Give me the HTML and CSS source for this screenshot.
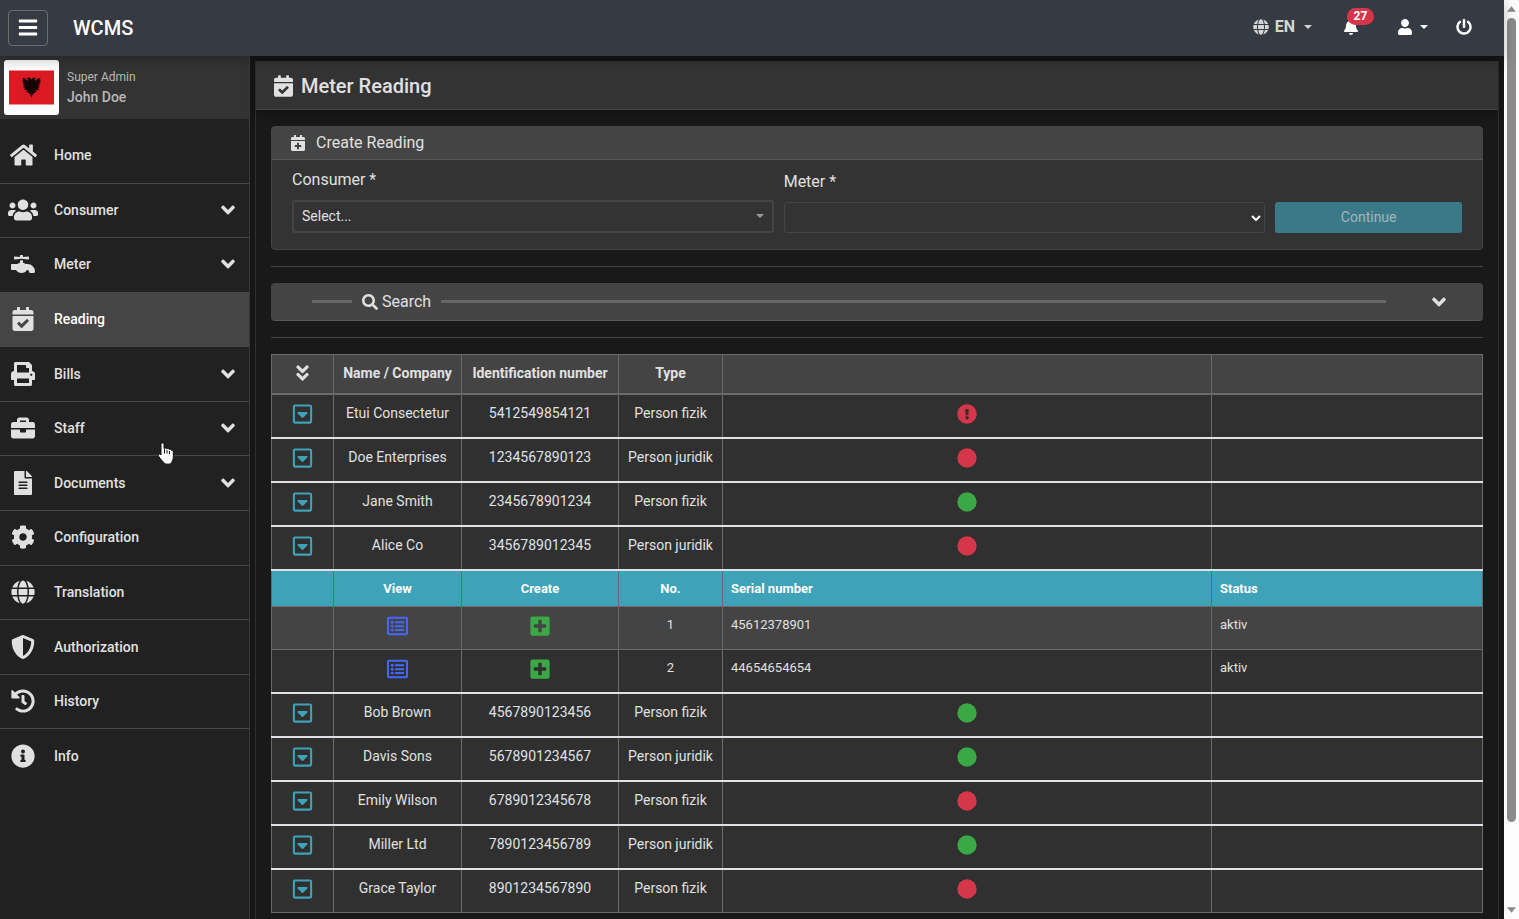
FILE: index.html
```
<!DOCTYPE html>
<html lang="en">
<head>
  <meta charset="UTF-8">
  <meta name="viewport" content="width=device-width, initial-scale=1.0">
  <title>WCMS - Meter Reading</title>
  <link rel="stylesheet" href="styles.css">
</head>
<body>

  <!-- icons -->
  <svg class="sprite" aria-hidden="true">
    <symbol id="bars" viewBox="0 0 448 512"><path d="M16 132h416c8.837 0 16-7.163 16-16V76c0-8.837-7.163-16-16-16H16C7.163 60 0 67.163 0 76v40c0 8.837 7.163 16 16 16zm0 160h416c8.837 0 16-7.163 16-16v-40c0-8.837-7.163-16-16-16H16c-8.837 0-16 7.163-16 16v40c0 8.837 7.163 16 16 16zm0 160h416c8.837 0 16-7.163 16-16v-40c0-8.837-7.163-16-16-16H16c-8.837 0-16 7.163-16 16v40c0 8.837 7.163 16 16 16z"/></symbol>
    <symbol id="home" viewBox="0 0 576 512"><path d="M280.37 148.26L96 300.11V464a16 16 0 0 0 16 16l112.06-.29a16 16 0 0 0 15.92-16V368a16 16 0 0 1 16-16h64a16 16 0 0 1 16 16v95.64a16 16 0 0 0 16 16.05L464 480a16 16 0 0 0 16-16V300L295.67 148.26a12.19 12.19 0 0 0-15.3 0zM571.6 251.47L488 182.56V44.05a12 12 0 0 0-12-12h-56a12 12 0 0 0-12 12v72.61L318.47 43a48 48 0 0 0-61 0L4.34 251.47a12 12 0 0 0-1.6 16.9l25.5 31A12 12 0 0 0 45.15 301l235.22-193.74a12.19 12.19 0 0 1 15.3 0L530.9 301a12 12 0 0 0 16.9-1.6l25.5-31a12 12 0 0 0-1.7-16.93z"/></symbol>
    <symbol id="users" viewBox="0 0 640 512"><path d="M96 224c35.3 0 64-28.7 64-64s-28.7-64-64-64-64 28.7-64 64 28.7 64 64 64zm448 0c35.3 0 64-28.7 64-64s-28.7-64-64-64-64 28.7-64 64 28.7 64 64 64zm32 32h-64c-17.6 0-33.5 7.1-45.1 18.6 40.3 22.1 68.9 62 75.1 109.4h66c17.7 0 32-14.3 32-32v-32c0-35.3-28.7-64-64-64zm-256 0c61.9 0 112-50.1 112-112S381.9 32 320 32 208 82.1 208 144s50.1 112 112 112zm76.8 32h-8.3c-20.8 10-43.9 16-68.5 16s-47.6-6-68.5-16h-8.3C179.6 288 128 339.6 128 403.2V432c0 26.5 21.5 48 48 48h288c26.5 0 48-21.5 48-48v-28.8c0-63.6-51.6-115.2-115.2-115.2zm-223.7-13.4C161.5 263.1 145.6 256 128 256H64c-35.3 0-64 28.7-64 64v32c0 17.7 14.3 32 32 32h65.9c6.3-47.4 34.9-87.3 75.2-109.4z"/></symbol>
    <symbol id="faucet" viewBox="0 0 512 512"><path d="M352 256H313.39c-15.71-13.44-35.46-23.07-57.39-28V180.44l-32-3.38-32 3.38V228c-21.93 5-41.68 14.6-57.39 28H16A16 16 0 0 0 0 272v96a16 16 0 0 0 16 16h92.79C129.38 421.73 173 448 224 448s94.62-26.27 115.21-64H352a32 32 0 0 1 32 32 32 32 0 0 0 32 32h64a32 32 0 0 0 32-32A160 160 0 0 0 352 256ZM81.59 159.91l142.41-15 142.41 15c9.42 1 17.59-6.81 17.59-16.8V112.89c0-10-8.17-17.8-17.59-16.81L256 107.74V80a16 16 0 0 0-16-16H208a16 16 0 0 0-16 16v27.74L81.59 96.08C72.17 95.09 64 102.9 64 112.89v30.22C64 153.1 72.17 160.91 81.59 159.91Z"/></symbol>
    <symbol id="calendar-check" viewBox="0 0 448 512"><path d="M436 160H12c-6.627 0-12-5.373-12-12v-36c0-26.51 21.49-48 48-48h48V12c0-6.627 5.373-12 12-12h40c6.627 0 12 5.373 12 12v52h128V12c0-6.627 5.373-12 12-12h40c6.627 0 12 5.373 12 12v52h48c26.51 0 48 21.49 48 48v36c0 6.627-5.373 12-12 12zM12 192h424c6.627 0 12 5.373 12 12v260c0 26.51-21.49 48-48 48H48c-26.51 0-48-21.49-48-48V204c0-6.627 5.373-12 12-12zm333.296 95.947l-28.169-28.398c-4.667-4.705-12.265-4.736-16.97-.068L194.12 364.665l-45.98-46.352c-4.667-4.705-12.266-4.736-16.971-.068l-28.397 28.17c-4.705 4.667-4.736 12.265-.068 16.97l82.601 83.269c4.667 4.705 12.265 4.736 16.97.068l142.953-141.805c4.705-4.667 4.736-12.265.068-16.97z"/></symbol>
    <symbol id="calendar-plus" viewBox="0 0 448 512"><path d="M436 160H12c-6.6 0-12-5.4-12-12v-36c0-26.5 21.5-48 48-48h48V12c0-6.6 5.4-12 12-12h40c6.6 0 12 5.4 12 12v52h128V12c0-6.6 5.4-12 12-12h40c6.6 0 12 5.4 12 12v52h48c26.5 0 48 21.5 48 48v36c0 6.6-5.4 12-12 12zM12 192h424c6.6 0 12 5.4 12 12v260c0 26.5-21.5 48-48 48H48c-26.5 0-48-21.5-48-48V204c0-6.6 5.4-12 12-12zm316 140c0-6.6-5.4-12-12-12h-60v-60c0-6.6-5.4-12-12-12h-40c-6.6 0-12 5.4-12 12v60h-60c-6.6 0-12 5.4-12 12v40c0 6.6 5.4 12 12 12h60v60c0 6.6 5.4 12 12 12h40c6.6 0 12-5.4 12-12v-60h60c6.6 0 12-5.4 12-12v-40z"/></symbol>
    <symbol id="print" viewBox="0 0 512 512"><path d="M448 192V77.25c0-8.49-3.37-16.62-9.37-22.63L393.37 9.37c-6-6-14.14-9.37-22.63-9.37H96C78.33 0 64 14.33 64 32v160c-35.35 0-64 28.65-64 64v112c0 8.84 7.16 16 16 16h48v96c0 17.67 14.33 32 32 32h320c17.67 0 32-14.33 32-32v-96h48c8.84 0 16-7.16 16-16V256c0-35.35-28.65-64-64-64zm-64 256H128v-96h256v96zm0-224H128V64h192v48c0 8.84 7.16 16 16 16h48v96zm48 72c-13.25 0-24-10.75-24-24 0-13.26 10.75-24 24-24s24 10.74 24 24c0 13.25-10.75 24-24 24z"/></symbol>
    <symbol id="briefcase" viewBox="0 0 512 512"><path d="M320 336c0 8.84-7.16 16-16 16h-96c-8.84 0-16-7.16-16-16v-48H0v144c0 25.6 22.4 48 48 48h416c25.6 0 48-22.4 48-48V288H320v48zm144-208h-80V80c0-25.6-22.4-48-48-48H176c-25.6 0-48 22.4-48 48v48H48c-25.6 0-48 22.4-48 48v80h512v-80c0-25.6-22.4-48-48-48zm-144 0H192V96h128v32z"/></symbol>
    <symbol id="file" viewBox="0 0 384 512"><path d="M224 136V0H24C10.7 0 0 10.7 0 24v464c0 13.3 10.7 24 24 24h336c13.3 0 24-10.7 24-24V160H248c-13.2 0-24-10.8-24-24zm64 236c0 6.6-5.4 12-12 12H108c-6.6 0-12-5.4-12-12v-8c0-6.6 5.4-12 12-12h168c6.6 0 12 5.4 12 12v8zm0-64c0 6.6-5.4 12-12 12H108c-6.6 0-12-5.4-12-12v-8c0-6.6 5.4-12 12-12h168c6.6 0 12 5.4 12 12v8zm0-72v8c0 6.6-5.4 12-12 12H108c-6.6 0-12-5.4-12-12v-8c0-6.6 5.4-12 12-12h168c6.6 0 12 5.4 12 12zm96-114.1v6.1H256V0h6.1c6.4 0 12.5 2.5 17 7l97.9 98c4.5 4.5 7 10.6 7 16.9z"/></symbol>
    <symbol id="cog" viewBox="0 0 512 512"><path d="M487.4 315.7l-42.6-24.6c4.3-23.2 4.3-47 0-70.2l42.6-24.6c4.9-2.8 7.1-8.6 5.5-14-11.1-35.6-30-67.8-54.7-94.6-3.8-4.1-10-5.1-14.8-2.3L380.8 110c-17.9-15.4-38.5-27.3-60.8-35.1V25.8c0-5.6-3.9-10.5-9.4-11.7-36.7-8.2-74.3-7.8-109.2 0-5.5 1.2-9.4 6.1-9.4 11.7V75c-22.2 7.9-42.8 19.8-60.8 35.1L88.7 85.5c-4.9-2.8-11-1.9-14.8 2.3-24.7 26.7-43.6 58.9-54.7 94.6-1.7 5.4.6 11.2 5.5 14L67.3 221c-4.3 23.2-4.3 47 0 70.2l-42.6 24.6c-4.9 2.8-7.1 8.6-5.5 14 11.1 35.6 30 67.8 54.7 94.6 3.8 4.1 10 5.1 14.8 2.3l42.6-24.6c17.9 15.4 38.5 27.3 60.8 35.1v49.2c0 5.6 3.9 10.5 9.4 11.7 36.7 8.2 74.3 7.8 109.2 0 5.5-1.2 9.4-6.1 9.4-11.7v-49.2c22.2-7.9 42.8-19.8 60.8-35.1l42.6 24.6c4.9 2.8 11 1.9 14.8-2.3 24.7-26.7 43.6-58.9 54.7-94.6 1.5-5.5-.7-11.3-5.6-14.1zM256 336c-44.1 0-80-35.9-80-80s35.9-80 80-80 80 35.9 80 80-35.9 80-80 80z"/></symbol>
    <symbol id="globe" viewBox="0 0 496 512"><path d="M336.5 160C322 70.7 287.8 8 248 8s-74 62.7-88.5 152h177zM152 256c0 22.2 1.2 43.5 3.3 64h185.3c2.1-20.5 3.3-41.8 3.3-64s-1.2-43.5-3.3-64H155.3c-2.1 20.5-3.3 41.8-3.3 64zm324.7-96c-28.6-67.9-86.5-120.4-158-141.6 24.4 33.8 41.2 84.7 50 141.6h108zM177.2 18.4C105.8 39.6 47.8 92.1 19.3 160h108c8.7-56.9 25.5-107.8 49.9-141.6zM487.4 192H372.7c2.1 21 3.3 42.5 3.3 64s-1.2 43-3.3 64h114.6c5.5-20.5 8.6-41.8 8.6-64s-3.1-43.5-8.5-64zM120 256c0-21.5 1.2-43 3.3-64H8.6C3.2 212.5 0 233.8 0 256s3.2 43.5 8.6 64h114.6c-2-21-3.2-42.5-3.2-64zm39.5 96c14.5 89.3 48.7 152 88.5 152s74-62.7 88.5-152h-177zm159.3 141.6c71.4-21.2 129.4-73.7 158-141.6h-108c-8.8 56.9-25.6 107.8-50 141.6zM19.3 352c28.6 67.9 86.5 120.4 158 141.6-24.4-33.8-41.2-84.7-50-141.6h-108z"/></symbol>
    <symbol id="shield" viewBox="0 0 512 512"><path d="M466.5 83.7l-192-80a48.15 48.15 0 0 0-36.9 0l-192 80C27.7 91.1 16 108.6 16 128c0 198.5 114.5 335.7 221.5 380.3 11.8 4.9 25.1 4.9 36.9 0C360.1 472.6 496 349.3 496 128c0-19.4-11.7-36.9-29.5-44.3zM256.1 446.3l-.1-381 175.9 73.3c-3.3 151.4-82.1 261.1-175.8 307.7z"/></symbol>
    <symbol id="history" viewBox="0 0 512 512"><path d="M504 255.531c.253 136.64-111.18 248.372-247.82 248.468-59.015.042-113.223-20.53-155.822-54.911-11.077-8.94-11.905-25.541-1.839-35.607l11.267-11.267c8.609-8.609 22.353-9.551 31.891-1.984C173.062 425.135 212.781 440 256 440c101.705 0 184-82.311 184-184 0-101.705-82.311-184-184-184-48.814 0-93.149 18.969-126.068 49.932l50.754 50.754c10.08 10.08 2.941 27.314-11.313 27.314H24c-8.837 0-16-7.163-16-16V38.627c0-14.254 17.234-21.393 27.314-11.314l49.372 49.372C129.209 34.136 189.552 8 256 8c136.81 0 247.747 110.78 248 247.531zm-180.912 78.784l9.823-12.63c8.138-10.463 6.253-25.542-4.21-33.679L288 256.349V152c0-13.255-10.745-24-24-24h-16c-13.255 0-24 10.745-24 24v135.651l65.409 50.874c10.463 8.137 25.541 6.253 33.679-4.21z"/></symbol>
    <symbol id="info" viewBox="0 0 512 512"><path d="M256 8C119.043 8 8 119.083 8 256c0 136.997 111.043 248 248 248s248-111.003 248-248C504 119.083 392.957 8 256 8zm0 110c23.196 0 42 18.804 42 42s-18.804 42-42 42-42-18.804-42-42 18.804-42 42-42zm56 254c0 6.627-5.373 12-12 12h-88c-6.627 0-12-5.373-12-12v-24c0-6.627 5.373-12 12-12h12v-64h-12c-6.627 0-12-5.373-12-12v-24c0-6.627 5.373-12 12-12h64c6.627 0 12 5.373 12 12v100h12c6.627 0 12 5.373 12 12v24z"/></symbol>
    <symbol id="angle-down" viewBox="0 0 320 512"><path d="M143 352.3L7 216.3c-9.4-9.4-9.4-24.6 0-33.9l22.6-22.6c9.4-9.4 24.6-9.4 33.9 0l96.4 96.4 96.4-96.4c9.4-9.4 24.6-9.4 33.9 0l22.6 22.6c9.4 9.4 9.4 24.6 0 33.9l-136 136c-9.2 9.4-24.4 9.4-33.8 0z"/></symbol>
    <symbol id="angle-double-down" viewBox="0 0 320 512"><path d="M143 256.3L7 120.3c-9.4-9.4-9.4-24.6 0-33.9l22.6-22.6c9.4-9.4 24.6-9.4 33.9 0l96.4 96.4 96.4-96.4c9.4-9.4 24.6-9.4 33.9 0L313 86.3c9.4 9.4 9.4 24.6 0 33.9l-136 136c-9.4 9.5-24.6 9.5-34 .1zm34 192l136-136c9.4-9.4 9.4-24.6 0-33.9l-22.6-22.6c-9.4-9.4-24.6-9.4-33.9 0L160 352.1l-96.4-96.4c-9.4-9.4-24.6-9.4-33.9 0L7 278.3c-9.4 9.4-9.4 24.6 0 33.9l136 136c9.4 9.5 24.6 9.5 34 .1z"/></symbol>
    <symbol id="search" viewBox="0 0 512 512"><path d="M505 442.7L405.3 343c-4.5-4.5-10.6-7-17-7H372c27.6-35.3 44-79.7 44-128C416 93.1 322.9 0 208 0S0 93.1 0 208s93.1 208 208 208c48.3 0 92.7-16.4 128-44v16.3c0 6.4 2.5 12.5 7 17l99.7 99.7c9.4 9.4 24.6 9.4 33.9 0l28.3-28.3c9.4-9.4 9.4-24.6.1-34zM208 336c-70.7 0-128-57.2-128-128 0-70.7 57.2-128 128-128 70.7 0 128 57.2 128 128 0 70.7-57.2 128-128 128z"/></symbol>
    <symbol id="bell" viewBox="0 0 448 512"><path d="M224 512c35.32 0 63.97-28.65 63.97-64H160.03c0 35.35 28.65 64 63.97 64zm215.39-149.71c-19.32-20.76-55.47-51.99-55.47-154.29 0-77.7-54.48-139.9-127.94-155.16V32c0-17.67-14.32-32-31.98-32s-31.98 14.33-31.98 32v20.84C118.56 68.1 64.08 130.3 64.08 208c0 102.3-36.15 133.53-55.47 154.29-6 6.45-8.66 14.16-8.61 21.71.11 16.4 12.98 32 32.1 32h383.8c19.12 0 32-15.6 32.1-32 .05-7.55-2.61-15.27-8.61-21.71z"/></symbol>
    <symbol id="user" viewBox="0 0 448 512"><path d="M224 256c70.7 0 128-57.3 128-128S294.7 0 224 0 96 57.3 96 128s57.3 128 128 128zm89.6 32h-16.7c-22.2 10.2-46.9 16-72.9 16s-50.6-5.8-72.9-16h-16.7C60.2 288 0 348.2 0 422.4V464c0 26.5 21.5 48 48 48h352c26.5 0 48-21.5 48-48v-41.6c0-74.2-60.2-134.4-134.4-134.4z"/></symbol>
    <symbol id="power" viewBox="0 0 512 512"><path d="M400 54.1c63 45 104 118.6 104 201.9 0 136.8-110.8 247.7-247.5 248C120 504.3 8.2 393 8 256.4 7.9 173.1 48.9 99.3 111.8 54.2c11.7-8.3 28-4.8 35 7.7L162.6 90c5.9 10.5 3.1 23.8-6.6 31-41.5 30.8-68 79.6-68 134.9-.1 92.3 74.5 168.1 168 168.1 91.6 0 168.6-74.2 168-169.1-.3-51.8-24.7-101.8-68.1-134-9.7-7.2-12.4-20.5-6.5-30.9l15.8-28.1c7-12.4 23.2-16.1 34.8-7.8zM296 264V24c0-13.3-10.7-24-24-24h-32c-13.3 0-24 10.7-24 24v240c0 13.3 10.7 24 24 24h32c13.3 0 24-10.7 24-24z"/></symbol>
    <symbol id="caret-square" viewBox="0 0 448 512"><path fill-rule="evenodd" d="M48 32h352c26.500 0 48 21.500 48 48v352c0 26.500-21.500 48-48 48H48c-26.500 0-48-21.500-48-48V80c0-26.500 21.500-48 48-48zm0 54v340c0 3.300 2.700 6 6 6h340c3.300 0 6-2.700 6-6V86c0-3.300-2.700-6-6-6H54c-3.300 0-6 2.700-6 6zm77 122h198c17.800 0 26.700 21.500 14.100 34.100l-98.900 98.300c-7.800 7.800-20.500 7.800-28.300 0l-98.900-98.300C98.300 229.500 107.200 208 125 208z"/></symbol>
    <symbol id="list-alt" viewBox="0 0 512 512"><path fill-rule="evenodd" d="M48 32h416c26.500 0 48 21.500 48 48v352c0 26.500-21.500 48-48 48H48c-26.500 0-48-21.500-48-48V80c0-26.500 21.500-48 48-48zm0 54v340c0 3.300 2.700 6 6 6h404c3.300 0 6-2.700 6-6V86c0-3.300-2.700-6-6-6H54c-3.300 0-6 2.700-6 6z"/><path d="M204 140h204a12 12 0 0 1 12 12v24a12 12 0 0 1-12 12H204a12 12 0 0 1-12-12v-24a12 12 0 0 1 12-12zm0 96h204a12 12 0 0 1 12 12v24a12 12 0 0 1-12 12H204a12 12 0 0 1-12-12v-24a12 12 0 0 1 12-12zm0 96h204a12 12 0 0 1 12 12v24a12 12 0 0 1-12 12H204a12 12 0 0 1-12-12v-24a12 12 0 0 1 12-12z"/><circle cx="128" cy="164" r="36"/><circle cx="128" cy="260" r="36"/><circle cx="128" cy="356" r="36"/></symbol>
    <symbol id="plus-square" viewBox="0 0 448 512"><path d="M400 32H48C21.500 32 0 53.500 0 80v352c0 26.500 21.500 48 48 48h352c26.500 0 48-21.500 48-48V80c0-26.500-21.500-48-48-48zm-32 252c0 6.600-5.400 12-12 12h-92v92c0 6.600-5.400 12-12 12h-56c-6.600 0-12-5.400-12-12v-92H92c-6.600 0-12-5.400-12-12v-56c0-6.600 5.400-12 12-12h92v-92c0-6.600 5.400-12 12-12h56c6.600 0 12 5.400 12 12v92h92c6.600 0 12 5.400 12 12v56z"/></symbol>
    <symbol id="exclamation" viewBox="0 0 512 512"><path d="M504 256c0 136.997-111.043 248-248 248S8 392.997 8 256C8 119.083 119.043 8 256 8s248 111.083 248 248zm-248 50c-25.405 0-46 20.595-46 46s20.595 46 46 46 46-20.595 46-46-20.595-46-46-46zm-43.673-165.346l7.418 136c.347 6.364 5.609 11.346 11.982 11.346h48.546c6.373 0 11.635-4.982 11.982-11.346l7.418-136c.375-6.874-5.098-12.654-11.982-12.654h-63.383c-6.884 0-12.356 5.780-11.981 12.654z"/></symbol>
    <symbol id="circle" viewBox="0 0 512 512"><circle cx="256" cy="256" r="248"/></symbol>
    <symbol id="caret" viewBox="0 0 8 4"><path d="M0 0h8L4 4z"/></symbol>
    <symbol id="arrow-up" viewBox="0 0 10 6"><path d="M0 6L5 0l5 6z"/></symbol>
    <symbol id="arrow-down" viewBox="0 0 10 6"><path d="M0 0l5 6 5-6z"/></symbol>
  </svg>

  <div class="page">
    <header class="navbar">
      <button type="button" class="toggle" aria-label="Toggle menu"><svg class="icon"><use href="#bars"/></svg></button>
      <a href="#" class="brand">WCMS</a>
      <nav class="navbar-links">
        <a href="#" class="lang"><svg class="icon"><use href="#globe"/></svg>EN<svg class="caret"><use href="#caret"/></svg></a>
        <a href="#" class="bell" aria-label="Notifications"><svg class="icon"><use href="#bell"/></svg><span class="badge">27</span></a>
        <a href="#" class="account" aria-label="Account"><svg class="icon"><use href="#user"/></svg><svg class="caret"><use href="#caret"/></svg></a>
        <a href="#" aria-label="Log out"><svg class="icon"><use href="#power"/></svg></a>
      </nav>
    </header>

    <div class="layout">
      <aside class="sidebar">
        <div class="profile">
          <div class="avatar">
            <svg viewBox="0 0 45 34" role="img" aria-label="Albania">
              <path fill="#dc1a24" d="M0 0h45v34H0z"/>
              <path fill="#160305" d="M22.500 9l-1.800-2-3 .4 1.600 1.500-.8 1.600-2.200-2.500-3.200-.8 1.300 2-1.400.8 1.700 1.100-1.600 1.200 2 .8-1.300 1.600 2.100.4-1.700 2.200 2.400-.2-2.200 2.700 2.800-.6 1.200.3-1.700 2.200 2.200-.4.600 1.600 1.400.2 1.600 4.200 1.600-4.200 1.400-.2.600-1.600 2.200.4-1.700-2.200 1.200-.3 2.800.6-2.200-2.700 2.400.2-1.700-2.200 2.100-.4-1.300-1.600 2-.8-1.600-1.200 1.700-1.100-1.400-.8 1.300-2-3.200.8-2.200 2.500-.8-1.600 1.600-1.500-3-.4z"/>
            </svg>
          </div>
          <div class="who">
            <span class="role">Super Admin</span>
            <strong>John Doe</strong>
          </div>
        </div>
        <ul class="menu">
          <li><a href="#"><span class="pic"><svg class="icon w-home"><use href="#home"/></svg></span>Home</a></li>
          <li><a href="#"><span class="pic"><svg class="icon w-users"><use href="#users"/></svg></span>Consumer<svg class="angle"><use href="#angle-down"/></svg></a></li>
          <li><a href="#"><span class="pic"><svg class="icon"><use href="#faucet"/></svg></span>Meter<svg class="angle"><use href="#angle-down"/></svg></a></li>
          <li class="active"><a href="#"><span class="pic"><svg class="icon"><use href="#calendar-check"/></svg></span>Reading</a></li>
          <li><a href="#"><span class="pic"><svg class="icon"><use href="#print"/></svg></span>Bills<svg class="angle"><use href="#angle-down"/></svg></a></li>
          <li><a href="#"><span class="pic"><svg class="icon"><use href="#briefcase"/></svg></span>Staff<svg class="angle"><use href="#angle-down"/></svg></a></li>
          <li><a href="#"><span class="pic"><svg class="icon"><use href="#file"/></svg></span>Documents<svg class="angle"><use href="#angle-down"/></svg></a></li>
          <li><a href="#"><span class="pic"><svg class="icon"><use href="#cog"/></svg></span>Configuration</a></li>
          <li><a href="#"><span class="pic"><svg class="icon"><use href="#globe"/></svg></span>Translation</a></li>
          <li><a href="#"><span class="pic"><svg class="icon"><use href="#shield"/></svg></span>Authorization</a></li>
          <li><a href="#"><span class="pic"><svg class="icon"><use href="#history"/></svg></span>History</a></li>
          <li><a href="#"><span class="pic"><svg class="icon"><use href="#info"/></svg></span>Info</a></li>
        </ul>
      </aside>

      <main class="panel">
        <div class="panel-header">
          <svg class="icon"><use href="#calendar-check"/></svg>
          <h1>Meter Reading</h1>
        </div>

        <div class="panel-body">
          <form class="card">
            <div class="card-header">
              <svg class="icon"><use href="#calendar-plus"/></svg>
              <h2>Create Reading</h2>
            </div>
            <div class="card-body">
              <div class="field">
                <label for="consumer">Consumer *</label>
                <div class="select-box thick">
                  <select id="consumer"><option>Select...</option></select>
                  <svg class="caret"><use href="#caret"/></svg>
                </div>
              </div>
              <div class="field">
                <label for="meter">Meter *</label>
                <div class="select-box">
                  <select id="meter"><option></option></select>
                  <svg class="check" viewBox="0 0 10 6"><path d="M1 1l4 4 4-4"/></svg>
                </div>
              </div>
              <button type="submit" class="btn-continue" disabled>Continue</button>
            </div>
          </form>

          <hr>

          <button type="button" class="search-bar">
            <span class="line short"></span>
            <svg class="icon"><use href="#search"/></svg>
            <span>Search</span>
            <span class="line"></span>
            <svg class="angle"><use href="#angle-down"/></svg>
          </button>

          <hr>

          <table class="readings">
            <colgroup>
              <col class="c-toggle"><col class="c-name"><col class="c-id"><col class="c-type"><col><col class="c-last">
            </colgroup>
            <thead>
              <tr>
                <th><button type="button" aria-label="Expand all"><svg class="double"><use href="#angle-double-down"/></svg></button></th>
                <th>Name / Company</th>
                <th>Identification number</th>
                <th>Type</th>
                <th></th>
                <th></th>
              </tr>
            </thead>
            <tbody>
              <tr>
                <td><button type="button" aria-label="Show meters"><svg class="icon"><use href="#caret-square"/></svg></button></td>
                <td>Etui Consectetur</td><td>5412549854121</td><td>Person fizik</td>
                <td><svg class="dot red"><use href="#exclamation"/></svg></td><td></td>
              </tr>
              <tr>
                <td><button type="button" aria-label="Show meters"><svg class="icon"><use href="#caret-square"/></svg></button></td>
                <td>Doe Enterprises</td><td>1234567890123</td><td>Person juridik</td>
                <td><svg class="dot red"><use href="#circle"/></svg></td><td></td>
              </tr>
              <tr>
                <td><button type="button" aria-label="Show meters"><svg class="icon"><use href="#caret-square"/></svg></button></td>
                <td>Jane Smith</td><td>2345678901234</td><td>Person fizik</td>
                <td><svg class="dot green"><use href="#circle"/></svg></td><td></td>
              </tr>
              <tr>
                <td><button type="button" aria-label="Show meters"><svg class="icon"><use href="#caret-square"/></svg></button></td>
                <td>Alice Co</td><td>3456789012345</td><td>Person juridik</td>
                <td><svg class="dot red"><use href="#circle"/></svg></td><td></td>
              </tr>
            </tbody>
            <tbody class="meters">
              <tr>
                <th></th><th>View</th><th>Create</th><th>No.</th><th>Serial number</th><th>Status</th>
              </tr>
              <tr class="odd">
                <td></td>
                <td><a href="#" class="blue" aria-label="View"><svg class="icon"><use href="#list-alt"/></svg></a></td>
                <td><a href="#" class="green" aria-label="Create"><svg class="icon"><use href="#plus-square"/></svg></a></td>
                <td>1</td><td>45612378901</td><td>aktiv</td>
              </tr>
              <tr>
                <td></td>
                <td><a href="#" class="blue" aria-label="View"><svg class="icon"><use href="#list-alt"/></svg></a></td>
                <td><a href="#" class="green" aria-label="Create"><svg class="icon"><use href="#plus-square"/></svg></a></td>
                <td>2</td><td>44654654654</td><td>aktiv</td>
              </tr>
            </tbody>
            <tbody>
              <tr>
                <td><button type="button" aria-label="Show meters"><svg class="icon"><use href="#caret-square"/></svg></button></td>
                <td>Bob Brown</td><td>4567890123456</td><td>Person fizik</td>
                <td><svg class="dot green"><use href="#circle"/></svg></td><td></td>
              </tr>
              <tr>
                <td><button type="button" aria-label="Show meters"><svg class="icon"><use href="#caret-square"/></svg></button></td>
                <td>Davis Sons</td><td>5678901234567</td><td>Person juridik</td>
                <td><svg class="dot green"><use href="#circle"/></svg></td><td></td>
              </tr>
              <tr>
                <td><button type="button" aria-label="Show meters"><svg class="icon"><use href="#caret-square"/></svg></button></td>
                <td>Emily Wilson</td><td>6789012345678</td><td>Person fizik</td>
                <td><svg class="dot red"><use href="#circle"/></svg></td><td></td>
              </tr>
              <tr>
                <td><button type="button" aria-label="Show meters"><svg class="icon"><use href="#caret-square"/></svg></button></td>
                <td>Miller Ltd</td><td>7890123456789</td><td>Person juridik</td>
                <td><svg class="dot green"><use href="#circle"/></svg></td><td></td>
              </tr>
              <tr>
                <td><button type="button" aria-label="Show meters"><svg class="icon"><use href="#caret-square"/></svg></button></td>
                <td>Grace Taylor</td><td>8901234567890</td><td>Person fizik</td>
                <td><svg class="dot red"><use href="#circle"/></svg></td><td></td>
              </tr>
            </tbody>
          </table>
        </div>
      </main>
    </div>
  </div>

  <div class="scrollbar">
    <svg><use href="#arrow-up"/></svg>
    <div class="track"><div class="thumb"></div></div>
    <svg><use href="#arrow-down"/></svg>
  </div>

  <svg class="cursor" viewBox="0 0 17 23" aria-hidden="true">
    <path d="M5.500 1C6.500 1 7 1.700 7 2.600V6.500l.6-.3c.8-.4 1.800-.1 2 .7.700-.6 2.100-.5 2.400.4.900-.4 2.200 0 2.400 1 1.200-.2 1.900.5 1.900 1.600v5.400c0 2.600-1.300 4-1.800 5.300-.4 1-1.700 1.600-3.500 1.600s-3.400-.5-4.200-1.600C5.500 19 3.500 17 1.600 14.200c-.9-1.400.4-2.700 1.700-1.900L4 13V2.600C4 1.700 4.500 1 5.500 1z"/>
    <path class="fingers" d="M7.500 7v4.500M10 8v3.500M12.500 9v3"/>
  </svg>

</body>
</html>
```
FILE: styles.css
```
* {
  box-sizing: border-box;
}

body {
  margin: 0;
  height: 100vh;
  display: flex;
  overflow: hidden;
  background-color: #161616;
  color: #e0e0e0;
  font-family: Roboto, "Liberation Sans", sans-serif;
  font-size: 16px;
  line-height: 24px;
}

a {
  color: inherit;
  text-decoration: none;
}

button {
  font-family: inherit;
  cursor: pointer;
}

svg {
  fill: currentColor;
  flex-shrink: 0;
}

.sprite {
  position: absolute;
  width: 0;
  height: 0;
}

.page {
  flex: 1;
  min-width: 0;
  display: flex;
  flex-direction: column;
}

/* navbar */
.navbar {
  flex-shrink: 0;
  display: flex;
  align-items: center;
  height: 56px;
  padding: 0 32px 0 8px;
  background-color: #363a42;
  color: #fff;
  position: relative;
  z-index: 2;
  box-shadow: 0 4px 12px rgba(0, 0, 0, 0.25);
}

.toggle {
  display: flex;
  align-items: center;
  justify-content: center;
  width: 40px;
  height: 36px;
  padding: 0 0 1px;
  background: none;
  border: 1px solid #6c6c6c;
  border-radius: 4px;
  color: #fff;
}

.toggle .icon {
  width: 20px;
  height: 21px;
}

.brand {
  margin-left: 25px;
  font-size: 20px;
  font-weight: 500;
}

.navbar-links {
  display: flex;
  align-items: center;
  margin-left: auto;
  padding-bottom: 2px;
}

.navbar-links a {
  display: flex;
  align-items: center;
  position: relative;
}

.navbar-links .icon {
  width: 16px;
  height: 16px;
}

.caret {
  width: 8px;
  height: 4px;
}

.lang {
  gap: 6px;
  margin-right: 31px;
  color: #d5d5d5;
  font-weight: 700;
}

.lang .caret {
  margin-left: 3px;
}

.bell {
  margin-right: 38px;
}

.badge {
  position: absolute;
  left: 4px;
  top: -11px;
  width: 27px;
  height: 17px;
  border-radius: 9px;
  background-color: #d6354a;
  font-size: 12px;
  font-weight: 700;
  line-height: 17px;
  text-align: center;
}

.account {
  gap: 7px;
  margin-right: 28px;
}

/* sidebar */
.layout {
  flex: 1;
  min-height: 0;
  display: flex;
}

.sidebar {
  flex-shrink: 0;
  width: 250px;
  background-color: #212121;
  border-right: 1px solid #3a3a3a;
}

.profile {
  display: flex;
  align-items: center;
  gap: 8px;
  height: 63px;
  padding: 4px;
  background-color: #333;
}

.avatar {
  display: flex;
  width: 55px;
  height: 55px;
  padding: 5px;
  background-color: #fff;
  border-radius: 3px;
}

.avatar svg {
  width: 100%;
  height: 100%;
}

.who {
  display: flex;
  flex-direction: column;
  padding-bottom: 2px;
  font-size: 14px;
  line-height: 20px;
  color: #b8b8b8;
}

.role {
  font-size: 12px;
}

.who strong {
  font-weight: 500;
}

.menu {
  list-style: none;
  margin: 10px 0 0;
  padding: 0;
  display: grid;
  grid-auto-rows: 1fr;
  height: 655px;
}

.menu li {
  border-bottom: 1px solid #484848;
}

.menu li:last-child {
  border-bottom: none;
}

.menu a {
  display: flex;
  align-items: center;
  height: 100%;
  padding: 0 14px 1px 8px;
  font-size: 14px;
  font-weight: 500;
}

.menu .pic {
  display: flex;
  justify-content: center;
  width: 30px;
  margin-right: 16px;
}

.menu .icon {
  width: 24px;
  height: 24px;
}

.menu .w-home {
  width: 27px;
}

.menu .w-users {
  width: 30px;
}

.angle {
  width: 14px;
  height: 22px;
  margin-left: auto;
}

.menu .active {
  background-color: #454545;
  border-color: #454545;
}

.menu .active a {
  color: #fff;
}

.menu .active .icon {
  color: #e0e0e0;
}

/* content */
.panel {
  flex: 1;
  min-width: 0;
  margin: 5px 5px 0;
  border: 1px solid #303030;
  border-width: 0 1px;
  background-color: #191919;
}

.panel-header {
  display: flex;
  align-items: center;
  gap: 8px;
  height: 49px;
  padding: 2px 18px 0;
  background-color: #333;
  border-bottom: 1px solid #444;
  box-shadow: 0 4px 12px rgba(0, 0, 0, 0.3);
}

.panel-header .icon {
  width: 19px;
  height: 22px;
}

h1 {
  margin: 0;
  font-size: 20px;
  font-weight: 500;
}

.panel-body {
  padding: 16px 15px;
}

hr {
  margin: 16px 0;
  border: none;
  border-top: 1px solid #444;
}

.card {
  background-color: #333;
  border: 1px solid #444;
  border-radius: 4px;
}

.card-header {
  display: flex;
  align-items: center;
  gap: 10px;
  height: 33px;
  padding: 0 18px;
  background-color: #444;
  border-bottom: 1px solid #575757;
}

.card-header .icon {
  width: 16px;
  height: 16px;
}

h2 {
  margin: 0;
  font-size: 16px;
  font-weight: 400;
}

.card-body {
  display: grid;
  grid-template-columns: repeat(12, 1fr);
  column-gap: 10px;
  align-items: end;
  padding: 8px 20px 16px;
}

.field {
  grid-column: span 5;
}

.field label {
  display: block;
  margin-bottom: 8px;
}

.select-box {
  position: relative;
}

.select-box select {
  display: block;
  appearance: none;
  width: 100%;
  height: 31px;
  padding: 0 8px 2px;
  background-color: #333;
  border: 1px solid #444;
  border-radius: 3px;
  color: #e0e0e0;
  font-family: inherit;
  font-size: 14px;
}

.thick select {
  height: 33px;
  border-width: 2px;
}

.select-box svg {
  position: absolute;
  right: 10px;
  top: 50%;
  margin-top: -3px;
  color: #999;
}

.select-box .check {
  right: 4px;
  width: 10px;
  height: 6px;
  fill: none;
  stroke: #fff;
  stroke-width: 2;
}

.btn-continue {
  grid-column: span 2;
  height: 31px;
  padding: 0 8px 2px;
  background-color: #3a7a88;
  border: none;
  border-radius: 3px;
  color: #a5b4b8;
  font-size: 14px;
}

.search-bar {
  display: flex;
  align-items: center;
  width: 100%;
  height: 38px;
  padding: 0 36px 1px 40px;
  background-color: #444;
  border: 1px solid #444;
  border-bottom: 1px solid #575757;
  border-radius: 4px;
  color: #e0e0e0;
  font-size: 16px;
}

.search-bar .icon {
  width: 16px;
  height: 16px;
  margin: 0 4px 0 10px;
}

.line {
  flex: 1;
  height: 3px;
  margin: 0 46px 0 10px;
  background-color: #666;
}

.line.short {
  flex: 0 0 40px;
  margin: 0;
}

/* table */
.readings {
  width: 100%;
  table-layout: fixed;
  border-collapse: collapse;
  background-color: #303030;
  font-size: 14px;
  line-height: 21px;
  text-align: center;
}

.c-toggle {
  width: 62px;
}

.c-name {
  width: 128px;
}

.c-id {
  width: 157px;
}

.c-type {
  width: 104px;
}

.c-last {
  width: 271px;
}

.readings th,
.readings td {
  height: 44px;
  padding: 8px 0;
  border: 1px solid #6a6a6a;
  vertical-align: top;
  white-space: nowrap;
}

.readings thead th {
  height: 39px;
  padding-bottom: 0;
  background-color: #444;
  border-bottom-width: 2px;
}

.readings tbody tr + tr td {
  border-top: 2px solid #dee2e6;
}

.readings tbody + tbody tr:first-child > * {
  border-top: 2px solid #dee2e6;
}

.readings button {
  display: block;
  margin: 0 auto;
  padding: 0;
  background: none;
  border: none;
  color: #3ea2b8;
}

.readings .icon {
  display: block;
  width: 22px;
  height: 22px;
  margin: 0 auto;
}

.readings button .icon,
.readings .blue .icon {
  width: 21px;
}

.readings .double {
  display: block;
  width: 13px;
  height: 20px;
  color: #e0e0e0;
}

.dot {
  display: block;
  width: 20px;
  height: 20px;
  margin: 1px auto 0;
}

.red {
  color: #d6364a;
}

.green {
  color: #39a845;
}

.blue {
  color: #4169ff;
}

.readings .meters th,
.readings .meters td {
  height: 43px;
  font-size: 13px;
  line-height: 19px;
}

.readings .meters th {
  height: 37px;
  padding-bottom: 7px;
  background-color: #3ea2b8;
  color: #fff;
}

.readings .meters tr + tr td {
  border-top: 1px solid #6a6a6a;
}

.meters th:nth-child(n + 5),
.meters td:nth-child(n + 5) {
  text-align: left;
}

.readings .meters th:nth-child(n + 5),
.readings .meters td:nth-child(n + 5) {
  padding-left: 8px;
}

.meters .odd {
  background-color: #444;
}

/* page scrollbar */
.scrollbar {
  flex-shrink: 0;
  display: flex;
  flex-direction: column;
  align-items: center;
  gap: 6px;
  width: 15px;
  padding: 6px 0;
  background-color: #fcfcfc;
  color: #8b8b8b;
}

.scrollbar svg {
  width: 9px;
  height: 6px;
}

.track {
  flex: 1;
}

.thumb {
  width: 9px;
  height: 91%;
  border-radius: 5px;
  background-color: #8b8b8b;
}

.cursor {
  position: absolute;
  z-index: 3;
  left: 157px;
  top: 442px;
  width: 17px;
  height: 23px;
  fill: #fff;
  stroke: #111;
  stroke-width: 1;
}

.cursor .fingers {
  fill: none;
}
```
